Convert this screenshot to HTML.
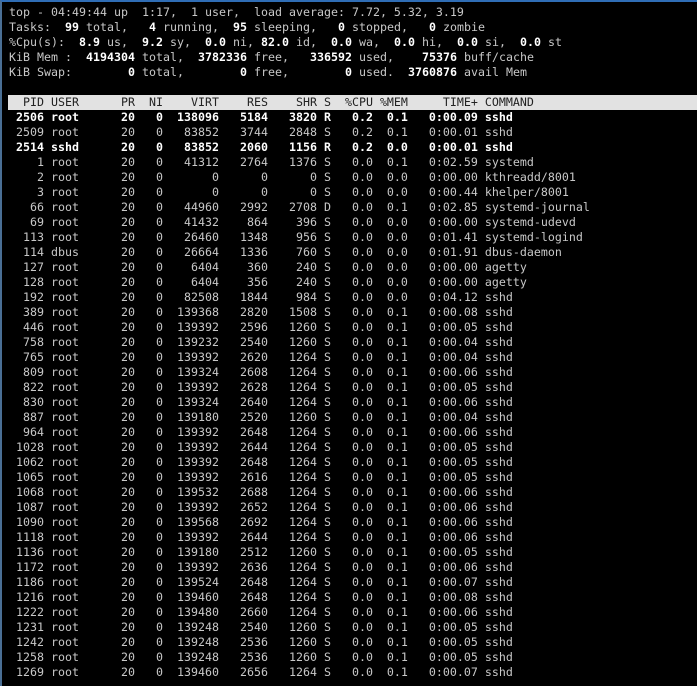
<!DOCTYPE html>
<html><head><style>
html,body{margin:0;padding:0;background:#000;width:697px;height:686px;overflow:hidden}
#f{position:absolute;left:0;top:0;width:697px;height:686px;border-top:2px solid #2f6db5;box-sizing:border-box;border-left:2px solid #4a6f95}
pre{position:absolute;left:9px;top:5px;margin:0;font-family:"DejaVu Sans Mono","Liberation Mono",monospace;font-size:11.63px;line-height:15px;color:#c8c8c8;white-space:pre}
b{color:#fff}
.h{position:absolute;left:8px;top:95px;width:689px;height:15px;background:#e2e2e2}
.ht{color:#222}
</style></head><body><div id="f"></div><div class="h"></div><pre>top - 04:49:44 up  1:17,  1 user,  load average: 7.72, 5.32, 3.19
Tasks: <b> 99 </b>total, <b>  4 </b>running, <b> 95 </b>sleeping, <b>  0 </b>stopped, <b>  0 </b>zombie
%Cpu(s): <b> 8.9 </b>us, <b> 9.2 </b>sy, <b> 0.0 </b>ni, <b>82.0 </b>id, <b> 0.0 </b>wa, <b> 0.0 </b>hi, <b> 0.0 </b>si, <b> 0.0 </b>st
KiB Mem : <b> 4194304 </b>total, <b> 3782336 </b>free, <b>  336592 </b>used, <b>   75376 </b>buff/cache
KiB Swap: <b>       0 </b>total, <b>       0 </b>free, <b>       0 </b>used. <b> 3760876 </b>avail Mem

<span class="ht">  PID USER      PR  NI    VIRT    RES    SHR S  %CPU %MEM     TIME+ COMMAND</span>
<b> 2506 root      20   0  138096   5184   3820 R   0.2  0.1   0:00.09 sshd</b>
 2509 root      20   0   83852   3744   2848 S   0.2  0.1   0:00.01 sshd
<b> 2514 sshd      20   0   83852   2060   1156 R   0.2  0.0   0:00.01 sshd</b>
    1 root      20   0   41312   2764   1376 S   0.0  0.1   0:02.59 systemd
    2 root      20   0       0      0      0 S   0.0  0.0   0:00.00 kthreadd/8001
    3 root      20   0       0      0      0 S   0.0  0.0   0:00.44 khelper/8001
   66 root      20   0   44960   2992   2708 D   0.0  0.1   0:02.85 systemd-journal
   69 root      20   0   41432    864    396 S   0.0  0.0   0:00.00 systemd-udevd
  113 root      20   0   26460   1348    956 S   0.0  0.0   0:01.41 systemd-logind
  114 dbus      20   0   26664   1336    760 S   0.0  0.0   0:01.91 dbus-daemon
  127 root      20   0    6404    360    240 S   0.0  0.0   0:00.00 agetty
  128 root      20   0    6404    356    240 S   0.0  0.0   0:00.00 agetty
  192 root      20   0   82508   1844    984 S   0.0  0.0   0:04.12 sshd
  389 root      20   0  139368   2820   1508 S   0.0  0.1   0:00.08 sshd
  446 root      20   0  139392   2596   1260 S   0.0  0.1   0:00.05 sshd
  758 root      20   0  139232   2540   1260 S   0.0  0.1   0:00.04 sshd
  765 root      20   0  139392   2620   1264 S   0.0  0.1   0:00.04 sshd
  809 root      20   0  139324   2608   1264 S   0.0  0.1   0:00.06 sshd
  822 root      20   0  139392   2628   1264 S   0.0  0.1   0:00.05 sshd
  830 root      20   0  139324   2640   1264 S   0.0  0.1   0:00.06 sshd
  887 root      20   0  139180   2520   1260 S   0.0  0.1   0:00.04 sshd
  964 root      20   0  139392   2648   1264 S   0.0  0.1   0:00.06 sshd
 1028 root      20   0  139392   2644   1264 S   0.0  0.1   0:00.05 sshd
 1062 root      20   0  139392   2648   1264 S   0.0  0.1   0:00.05 sshd
 1065 root      20   0  139392   2616   1264 S   0.0  0.1   0:00.05 sshd
 1068 root      20   0  139532   2688   1264 S   0.0  0.1   0:00.06 sshd
 1087 root      20   0  139392   2652   1264 S   0.0  0.1   0:00.06 sshd
 1090 root      20   0  139568   2692   1264 S   0.0  0.1   0:00.06 sshd
 1118 root      20   0  139392   2644   1264 S   0.0  0.1   0:00.06 sshd
 1136 root      20   0  139180   2512   1260 S   0.0  0.1   0:00.05 sshd
 1172 root      20   0  139392   2636   1264 S   0.0  0.1   0:00.06 sshd
 1186 root      20   0  139524   2648   1264 S   0.0  0.1   0:00.07 sshd
 1216 root      20   0  139460   2648   1264 S   0.0  0.1   0:00.08 sshd
 1222 root      20   0  139480   2660   1264 S   0.0  0.1   0:00.06 sshd
 1231 root      20   0  139248   2540   1260 S   0.0  0.1   0:00.05 sshd
 1242 root      20   0  139248   2536   1260 S   0.0  0.1   0:00.05 sshd
 1258 root      20   0  139248   2536   1260 S   0.0  0.1   0:00.05 sshd
 1269 root      20   0  139460   2656   1264 S   0.0  0.1   0:00.07 sshd
</pre></body></html>
